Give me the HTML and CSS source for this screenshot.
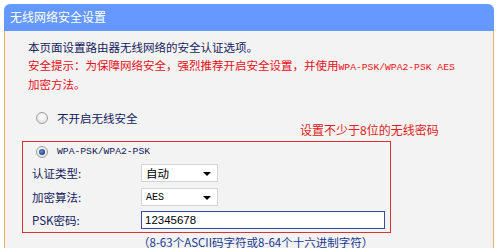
FILE: index.html
```html
<!DOCTYPE html>
<html lang="zh-CN">
<head>
    <meta charset="UTF-8">
    <meta name="viewport" content="width=device-width, initial-scale=1.0">
    <title>无线网络安全设置</title>
    <link rel="stylesheet" href="styles.css">
</head>
<body>
    <div class="panel">
        <div class="panel-title">无线网络安全设置</div>
        <div class="panel-body">
            <div class="intro">
                <p>本页面设置路由器无线网络的安全认证选项。</p>
                <p class="warn">安全提示：为保障网络安全，强烈推荐开启安全设置，并使用<span class="mono">WPA-PSK/WPA2-PSK AES</span></p>
                <p class="warn">加密方法。</p>
            </div>

            <div class="opt-row">
                <span class="radio"></span>
                <span>不开启无线安全</span>
            </div>

            <div class="note">设置不少于8位的无线密码</div>

            <div class="psk-box">
                <div class="opt-row inner">
                    <span class="radio checked"></span>
                    <span class="mono">WPA-PSK/WPA2-PSK</span>
                </div>
                <div class="field">
                    <label>认证类型:</label>
                    <span class="select">自动</span>
                </div>
                <div class="field">
                    <label>加密算法:</label>
                    <span class="select mono-val">AES</span>
                </div>
                <div class="field">
                    <label>PSK密码:</label>
                    <input type="text" class="pwd" value="12345678">
                </div>
            </div>

            <div class="hint">（8-63个ASCII码字符或8-64个十六进制字符）</div>
        </div>
    </div>
</body>
</html>
```

FILE: styles.css
```css
*{
    box-sizing: border-box;
}
html, body{
    overflow: hidden;
}
body{
    margin: 0;
    background-color: #ffffff;
    font-family: "Noto Sans CJK SC", "Liberation Sans", sans-serif;
    font-size: 11.5px;
    color: #14225c;
}
p{
    margin: 0;
}
.panel{
    margin: 4px 6px 0 4px;
}
.panel-title{
    height: 27px;
    line-height: 26px;
    padding-left: 6px;
    background-color: #6699ff;
    border-radius: 6px 6px 0 0;
    color: #ffffff;
    font-size: 12px;
}
.panel-body{
    height: 217px;
    padding-top: 8px;
    background-color: #f3f3f3;
    border-left: 1px solid #f0b060;
    border-right: 1px solid #f0b060;
}
.intro{
    padding-left: 23px;
    line-height: 17.5px;
}
.warn{
    color: #e8101a;
}
.mono{
    font-family: "Liberation Mono", monospace;
    font-size: 9.7px;
}
.opt-row{
    display: flex;
    align-items: center;
    gap: 9px;
    height: 16px;
    margin-top: 16px;
    padding-left: 31px;
}
.radio{
    width: 12px;
    height: 12px;
    border-radius: 50%;
    border: 1px solid #a0a0a0;
    background: radial-gradient(circle at 50% 40%, #ffffff 0, #e4e4e4 70%, #d0d0d0 100%);
    position: relative;
}
.radio.checked::after{
    content: "";
    position: absolute;
    left: 2px;
    top: 2px;
    width: 6px;
    height: 6px;
    border-radius: 50%;
    background: radial-gradient(circle at 40% 40%, #6a8fd0 0, #1a3878 80%);
}
.note{
    margin-top: -3px;
    margin-left: 295px;
    line-height: 14px;
    font-size: 12px;
    color: #e02020;
}
.psk-box{
    display: grid;
    grid-template-rows: 20px 23.5px 23.5px 23.5px;
    width: 369px;
    height: 92px;
    margin-top: 4px;
    margin-left: 17px;
    border: 1px solid #e03030;
}
.opt-row.inner{
    margin-top: 0;
    height: 20px;
    padding-left: 13px;
}
.field{
    display: flex;
    align-items: center;
    padding-left: 9px;
}
.field label{
    width: 109px;
}
.select{
    position: relative;
    width: 77px;
    height: 18px;
    line-height: 17px;
    padding-left: 4px;
    background-color: #ffffff;
    border: 1px solid #d4d4d4;
    color: #000000;
}
.select::after{
    content: "";
    position: absolute;
    right: 6px;
    top: 7px;
    border-left: 4px solid transparent;
    border-right: 4px solid transparent;
    border-top: 4px solid #000000;
}
.mono-val{
    font-family: "Liberation Mono", monospace;
    font-size: 10px;
}
.pwd{
    width: 244px;
    height: 18px;
    padding: 0 3px;
    border: 1px solid #3a4aa8;
    background-color: #ffffff;
    font-family: "Liberation Sans", sans-serif;
    font-size: 11.5px;
    color: #000000;
    outline: none;
}
.hint{
    margin-top: 1px;
    margin-left: 133px;
    line-height: 16px;
    font-size: 11.5px;
    color: #1a3a90;
}
```
